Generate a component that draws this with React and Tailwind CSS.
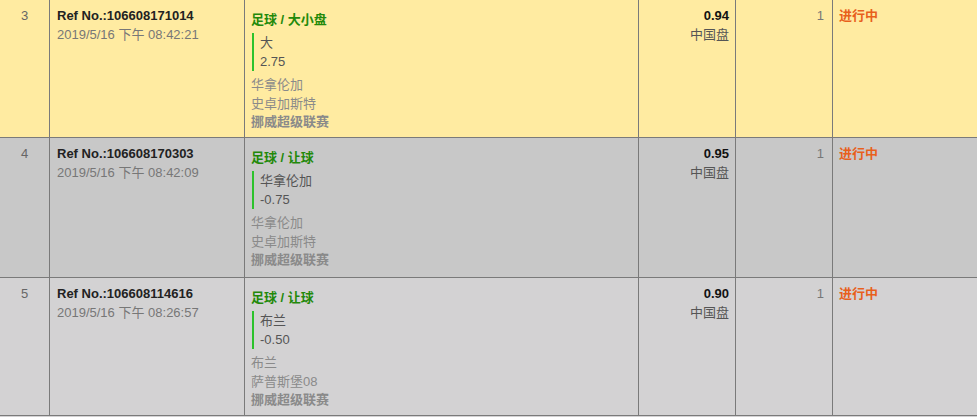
const rows = [
  {
    no: 3,
    ref: "106608171014",
    time: "2019/5/16 下午 08:42:21",
    market: "足球 / 大小盘",
    pick: "大",
    line: "2.75",
    home: "华拿伦加",
    away: "史卓加斯特",
    league: "挪威超级联赛",
    odds: "0.94",
    stake: 1,
    bg: "bg-[#ffeba1]",
    h: "h-[138px]",
  },
  {
    no: 4,
    ref: "106608170303",
    time: "2019/5/16 下午 08:42:09",
    market: "足球 / 让球",
    pick: "华拿伦加",
    line: "-0.75",
    home: "华拿伦加",
    away: "史卓加斯特",
    league: "挪威超级联赛",
    odds: "0.95",
    stake: 1,
    bg: "bg-[#c8c8c8]",
    h: "h-[140px]",
  },
  {
    no: 5,
    ref: "106608114616",
    time: "2019/5/16 下午 08:26:57",
    market: "足球 / 让球",
    pick: "布兰",
    line: "-0.50",
    home: "布兰",
    away: "萨普斯堡08",
    league: "挪威超级联赛",
    odds: "0.90",
    stake: 1,
    bg: "bg-[#d3d2d3]",
    h: "h-[138px]",
  },
];

export default function App() {
  return (
    <div
      className="w-[977px] h-[417px] overflow-hidden bg-[#d3d2d3] text-[13px] leading-[19px]"
      style={{ fontFamily: '"Liberation Sans", Arial, "Noto Sans CJK SC", sans-serif' }}
    >
      {rows.map((r) => (
        <div key={r.no} className={`flex ${r.h} border-b border-[#7a7a7a] ${r.bg}`}>
          {/* # */}
          <div className="w-[50px] shrink-0 border-r border-[#7a7a7a] pt-[6px] text-center text-[#666]">
            {r.no}
          </div>

          {/* ref + time */}
          <div className="w-[195px] shrink-0 border-r border-[#7a7a7a] pl-[7px] pt-[6px]">
            <div className="font-bold text-[#222]">Ref No.:{r.ref}</div>
            <div className="text-[#777]">{r.time}</div>
          </div>

          {/* bet detail */}
          <div className="w-[394px] shrink-0 border-r border-[#7a7a7a] pl-[6px] pt-[10px]">
            <div className="font-bold text-[#23890a]">{r.market}</div>
            <div className="ml-px mt-[4px] mb-[5px] border-l-2 border-[#2cc22c] pl-[6px] text-[#555]">
              <div>{r.pick}</div>
              <div>{r.line}</div>
            </div>
            <div className="leading-[18.5px] text-[#8a8a8a]">
              <div>{r.home}</div>
              <div>{r.away}</div>
              <div className="font-bold">{r.league}</div>
            </div>
          </div>

          {/* odds */}
          <div className="w-[97px] shrink-0 border-r border-[#7a7a7a] pr-[6px] pt-[6px] text-right">
            <div className="font-bold text-[#111]">{r.odds}</div>
            <div className="text-[#555]">中国盘</div>
          </div>

          {/* stake */}
          <div className="w-[97px] shrink-0 border-r border-[#7a7a7a] pr-[8px] pt-[6px] text-right text-[#777]">
            {r.stake}
          </div>

          {/* status */}
          <div className="flex-1 pl-[6px] pt-[6px] font-bold text-[#e8601c]">进行中</div>
        </div>
      ))}
    </div>
  );
}
